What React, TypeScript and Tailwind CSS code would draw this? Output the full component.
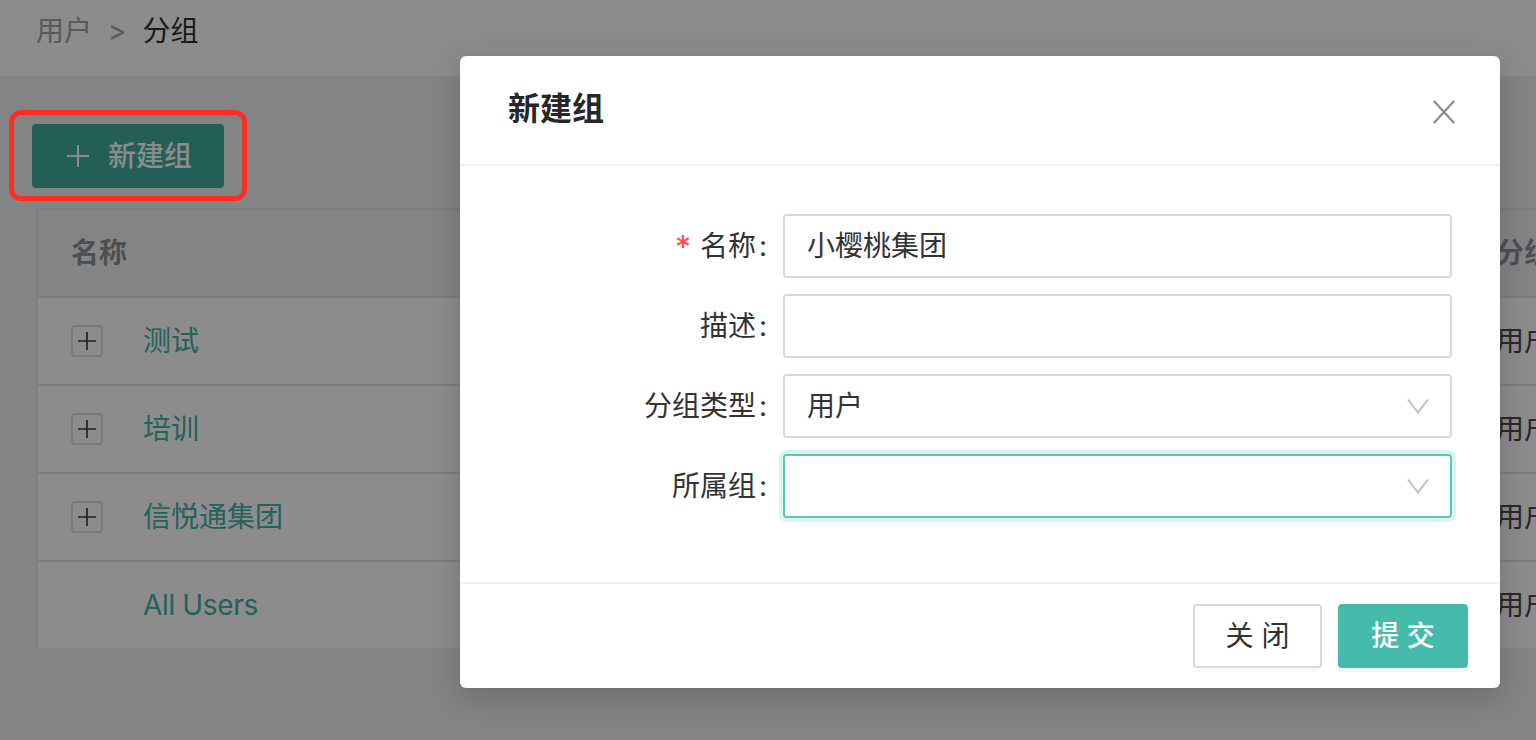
const rows = ["测试", "培训", "信悦通集团", "All Users"];

const fields = [
  { label: "名称", required: true, value: "小樱桃集团" },
  { label: "描述", value: "" },
  { label: "分组类型", value: "用户", select: true },
  { label: "所属组", value: "", select: true, focused: true },
];

function Chevron() {
  return (
    <svg width="22" height="16" viewBox="0 0 22 16" fill="none" className="absolute right-[21px] top-[22px] text-[#bfbfbf]">
      <path d="M1 1.5 11 14.5 21 1.5" stroke="currentColor" strokeWidth="2" />
    </svg>
  );
}

function PlusIcon({ size, className }: { size: number; className?: string }) {
  return (
    <svg width={size} height={size} viewBox="0 0 22 22" fill="none" className={className}>
      <path d="M11 0v22M0 11h22" stroke="currentColor" strokeWidth="2" />
    </svg>
  );
}

function Field({ label, required, value, select, focused }: (typeof fields)[number]) {
  return (
    <div className="flex items-center">
      <label className="flex w-[307px] items-center justify-end text-[#333333]">
        {required && <span className="mr-[9px] mt-1 text-[32px] leading-none text-[#ff4d4f]">*</span>}
        {label}
        <span className="ml-[3px] mr-[1px] w-[7px]">:</span>
      </label>
      <div
        className={
          focused
            ? "relative ml-4 h-16 w-[669px] rounded border-2 border-[#5cc7b6] pl-[22px] leading-[60px] text-[#333333] shadow-[0_0_0_4px_#daf3ef]"
            : "relative ml-4 h-16 w-[669px] rounded border-2 border-[#d9d9d9] pl-[22px] leading-[60px] text-[#333333]"
        }
      >
        {value}
        {select && <Chevron />}
      </div>
    </div>
  );
}

export default function App() {
  return (
    <div className="relative h-[740px] w-[1536px] overflow-hidden bg-[#eef0f3] font-['Inter','Noto_Sans_CJK_SC',sans-serif] text-[28px]">
      <div className="flex h-[76px] items-center bg-white pb-[15px] pl-9">
        <span className="text-[#a3a3a3]">用户</span>
        <span className="mx-4 text-[#a3a3a3]">&gt;</span>
        <span className="text-[#2f2f2f]">分组</span>
      </div>

      <div className="pt-12">
        <div className="relative ml-8 w-48">
          <button className="flex h-16 w-48 items-center rounded bg-[#40ad9e] pl-[35px] font-medium text-white">
            <PlusIcon size={22} />
            <span className="ml-[19px]">新建组</span>
          </button>
          <span className="absolute -inset-x-[23px] -bottom-[13px] -top-[14px] z-20 rounded-[12px] border-[5px] border-[#ff2d20]" />
        </div>

        <div className="ml-9 mt-5 w-[1600px] border-l-2 border-t-2 border-[#e4e5e8]">
          <div className="flex h-[88px] items-center border-b-2 border-[#e8e8e8] bg-[#eff0f3] font-semibold text-[#8f9094]">
            <div className="w-[1458px] pl-[33px]">名称</div>
            <div>分组类型</div>
          </div>
          {rows.map((name, i) => (
            <div
              key={name}
              className={
                i < 3
                  ? "flex h-[88px] items-center border-b-2 border-[#e8e8e8] bg-white"
                  : "flex h-[86px] items-center bg-white"
              }
            >
              <div className="flex w-[1458px] items-center pl-[33px]">
                {i < 3 ? (
                  <div className="flex h-8 w-8 items-center justify-center rounded border-2 border-[#e0e0e0] text-[#3c3c3c]">
                    <PlusIcon size={18} />
                  </div>
                ) : (
                  <div className="h-8 w-8" />
                )}
                <span className={i < 3 ? "ml-10 text-[#42b5a5]" : "ml-10 tracking-[-0.35px] text-[#42b5a5]"}>{name}</span>
              </div>
              <div className="text-[#4a4a4a]">用户</div>
            </div>
          ))}
        </div>
      </div>

      <div className="absolute inset-0 z-10 bg-black/45" />

      <div className="absolute left-[460px] top-14 z-30 h-[632px] w-[1040px] rounded-md bg-white shadow-[0_8px_32px_rgba(0,0,0,0.2)]">
        <div className="relative flex h-[110px] items-center border-b-2 border-[#f0f0f0] pb-[2px] pl-12">
          <h2 className="text-[32px] font-semibold text-[#262626]">新建组</h2>
          <svg width="22" height="24" viewBox="0 0 24 26" fill="none" className="absolute right-[45px] top-[44px] text-[#8c8c8c]">
            <path d="M1 1l22 24M23 1 1 25" stroke="currentColor" strokeWidth="2.4" />
          </svg>
        </div>

        <form className="flex h-[416px] flex-col gap-4 pt-12">
          {fields.map((field) => (
            <Field key={field.label} {...field} />
          ))}
        </form>

        <div className="flex h-[106px] items-start justify-end gap-4 border-t-2 border-[#f0f0f0] pr-8 pt-5">
          <button className="h-16 w-[129px] rounded border-2 border-[#d9d9d9] bg-white text-[#333333] shadow-[0_4px_0_rgba(0,0,0,0.02)]">
            关 闭
          </button>
          <button className="h-16 w-[130px] rounded bg-[#45bbab] font-medium text-white shadow-[0_4px_0_rgba(0,0,0,0.04)]">
            提 交
          </button>
        </div>
      </div>
    </div>
  );
}
